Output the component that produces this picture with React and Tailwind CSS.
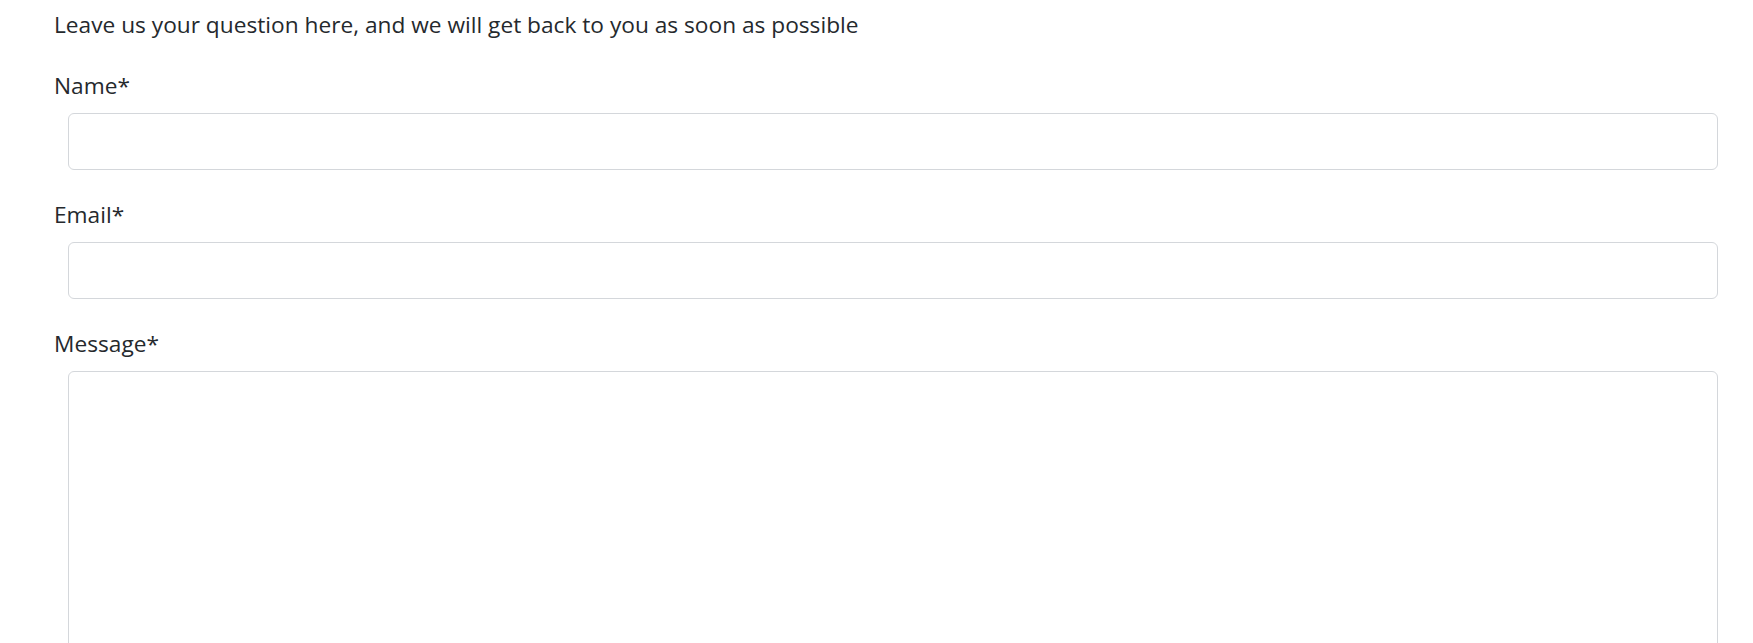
import React from "react";

const Field = ({ label, multiline }) => (
  <div className="flex flex-col">
    <label className="h-[33px] pt-[3px] leading-[30px]">{label}</label>
    {multiline ? (
      <textarea className="mt-[12px] ml-[14px] h-[320px] resize-none rounded-[6px] border border-[#d4d7db] bg-white" />
    ) : (
      <input
        type="text"
        className="mt-[12px] ml-[14px] h-[57px] rounded-[6px] border border-[#d4d7db] bg-white"
      />
    )}
  </div>
);

export default function App() {
  return (
    <div className="min-h-screen bg-white pl-[54px] pr-[35px] pt-[10px] font-['Open_Sans',sans-serif] text-[22.7px] text-[#25292d]">
      <p className="h-[30px] leading-[30px] whitespace-nowrap">
        Leave us your question here, and we will get back to you as soon as possible
      </p>
      <div className="mt-[28px] flex flex-col gap-[27px]">
        <Field label="Name*" />
        <Field label="Email*" />
        <Field label="Message*" multiline />
      </div>
    </div>
  );
}
